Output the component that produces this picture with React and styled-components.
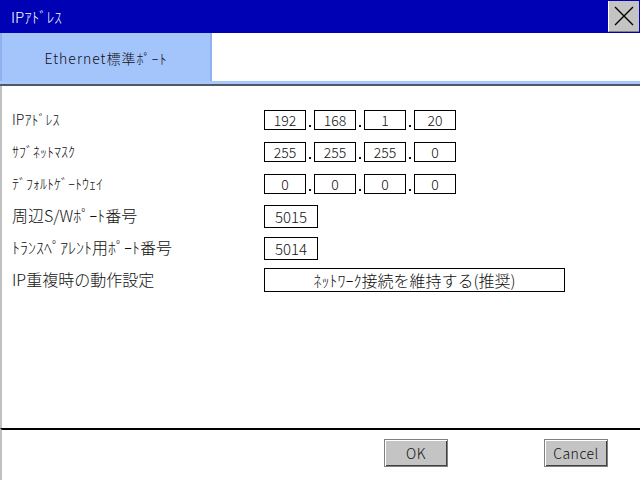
import { Fragment } from "react"
import styled, { createGlobalStyle } from "styled-components"

const Global = createGlobalStyle`
  html, body { margin: 0; padding: 0; background: #ffffff; }
  body { font-family: "Noto Sans CJK JP", "DejaVu Sans", sans-serif; }
`

const Window = styled.div`
  width: 640px;
  height: 480px;
  display: flex;
  flex-direction: column;
  background: #ffffff;
  overflow: hidden;
`

const TitleBar = styled.div`
  height: 33px;
  background: #0000b4;
  display: flex;
  align-items: center;
  justify-content: space-between;
  padding-left: 11px;
  box-sizing: border-box;
`

const Title = styled.span`
  color: #ffffff;
  font-size: 15px;
  font-weight: 300;
`

const CloseBtn = styled.div`
  width: 31px;
  height: 31px;
  margin-right: 1px;
  margin-top: -1px;
  background: #c4c4c4;
  border-left: 1px solid #ffffff;
  border-bottom: 1px solid #808080;
  box-sizing: border-box;
  display: flex;
  align-items: center;
  justify-content: center;
`

const TabStrip = styled.div`
  height: 48px;
  display: flex;
  border-bottom: 3px solid #a8c8f8;
`

const Tab = styled.div`
  width: 212px;
  background: #a4c4fc;
  border-right: 2px solid #90b0f0;
  border-left: 2px solid #90b0f0;
  box-sizing: border-box;
  display: flex;
  align-items: center;
  justify-content: center;
  font-size: 14px;
  font-weight: 300;
  color: #101010;
  letter-spacing: 1px;
  padding-top: 2px;
`

const DarkRule = styled.div`
  height: 2px;
  background: #505868;
`

const Body = styled.div`
  flex: 1;
  border-left: 2px solid #c0c0c0;
  padding: 18px 0 0 10px;
  display: grid;
  grid-template-columns: 252px 1fr;
  grid-auto-rows: 32px;
  align-content: start;
`

const Label = styled.div`
  display: flex;
  align-items: center;
  font-size: ${(p) => (p.big ? "16px" : "14px")};
  font-weight: 300;
  color: #101010;
  white-space: nowrap;
  margin-top: ${(p) => (p.big ? "-2px" : "-3px")};
`

const Field = styled.div`
  display: flex;
  align-items: center;
`

const Box = styled.div`
  width: ${(p) => p.w || 42}px;
  height: ${(p) => p.h || 20}px;
  border: 1px solid #000000;
  box-sizing: border-box;
  display: flex;
  align-items: center;
  justify-content: center;
  font-size: ${(p) => p.fs || 14}px;
  font-weight: 300;
  color: #101010;
  background: #ffffff;
`

// small square dot sitting on the bottom line of the octet boxes
const Dot = styled.span`
  width: 8px;
  height: 20px;
  display: flex;
  align-items: flex-end;
  justify-content: center;
  padding-bottom: 3px;
  box-sizing: border-box;
  &::after {
    content: "";
    width: 2px;
    height: 2px;
    background: #101010;
  }
`

const Footer = styled.div`
  height: 52px;
  border-top: 2px solid #000000;
  border-left: 2px solid #c0c0c0;
  box-sizing: border-box;
  display: flex;
  align-items: center;
  justify-content: flex-end;
  gap: 96px;
  padding-right: 32px;
  padding-bottom: 4px;
`

const Button = styled.div`
  width: 64px;
  height: 28px;
  background: #c4c4c4;
  border: 1px solid #808080;
  box-shadow: inset 1px 1px 0 #ffffff, inset -1px -1px 0 #404040;
  box-sizing: border-box;
  display: flex;
  align-items: center;
  justify-content: center;
  font-size: 14px;
  font-weight: 300;
  letter-spacing: 0.5px;
  color: #101010;
`

const ipRows = [
  { label: "IPｱﾄﾞﾚｽ", values: ["192", "168", "1", "20"] },
  { label: "ｻﾌﾞﾈｯﾄﾏｽｸ", values: ["255", "255", "255", "0"] },
  { label: "ﾃﾞﾌｫﾙﾄｹﾞｰﾄｳｪｲ", values: ["0", "0", "0", "0"] },
]

function Octets({ values }) {
  return (
    <Field>
      {values.map((v, i) => (
        <Fragment key={i}>
          {i > 0 && <Dot />}
          <Box>{v}</Box>
        </Fragment>
      ))}
    </Field>
  )
}

export default function App() {
  return (
    <Window>
      <Global />
      <TitleBar>
        <Title>IPｱﾄﾞﾚｽ</Title>
        <CloseBtn>
          <svg width="24" height="24" viewBox="0 0 24 24">
            <path d="M3 3 L21 21 M21 3 L3 21" stroke="#000" strokeWidth="1.4" fill="none" />
          </svg>
        </CloseBtn>
      </TitleBar>
      <TabStrip>
        <Tab>Ethernet標準ﾎﾟｰﾄ</Tab>
      </TabStrip>
      <DarkRule />
      <Body>
        {ipRows.map((r) => (
          <Fragment key={r.label}>
            <Label>{r.label}</Label>
            <Octets values={r.values} />
          </Fragment>
        ))}
        <Label big>周辺S/Wﾎﾟｰﾄ番号</Label>
        <Field>
          <Box w={54} h={23} fs={15}>5015</Box>
        </Field>
        <Label big>ﾄﾗﾝｽﾍﾟｱﾚﾝﾄ用ﾎﾟｰﾄ番号</Label>
        <Field>
          <Box w={54} h={23} fs={15}>5014</Box>
        </Field>
        <Label big>IP重複時の動作設定</Label>
        <Field>
          <Box w={301} h={24} fs={16}>ﾈｯﾄﾜｰｸ接続を維持する(推奨)</Box>
        </Field>
      </Body>
      <Footer>
        <Button>OK</Button>
        <Button>Cancel</Button>
      </Footer>
    </Window>
  )
}
